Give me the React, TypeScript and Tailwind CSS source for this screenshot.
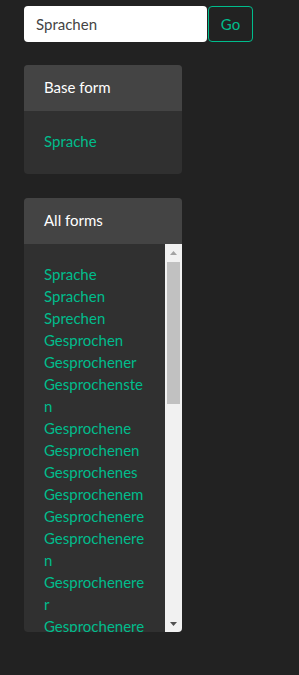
import React from 'react';

const forms = [
  'Sprache',
  'Sprachen',
  'Sprechen',
  'Gesprochen',
  'Gesprochener',
  'Gesprochensten',
  'Gesprochene',
  'Gesprochenen',
  'Gesprochenes',
  'Gesprochenem',
  'Gesprochenere',
  'Gesprocheneren',
  'Gesprochenerer',
  'Gesprocheneres',
  'Gesprochenerem',
];

const App = () => {
  return (
    <div className="min-h-[675px] bg-[#222222] font-['Lato',sans-serif] text-[15px] leading-[22px] text-white">
      <div className="px-6 pt-[6px]">
        {/* Search */}
        <form className="flex" onSubmit={(e) => e.preventDefault()}>
          <input
            type="text"
            defaultValue="Sprachen"
            className="h-[36px] w-[183px] rounded-[4px] bg-white px-3 pb-px text-[15px] text-[#444444] outline-none"
          />
          <button
            type="submit"
            className="ml-px h-[36px] w-[45px] rounded-[4px] border border-[#00bc8c] text-[15px] text-[#00bc8c]"
          >
            Go
          </button>
        </form>

        {/* Base form */}
        <div className="mt-[23px] w-[158px] overflow-hidden rounded-[4px] bg-[#303030]">
          <div className="bg-[#444444] px-5 pt-[11px] pb-[13px]">Base form</div>
          <div className="px-5 pt-[19px] pb-[22px] text-[#00bc8c]">Sprache</div>
        </div>

        {/* All forms */}
        <div className="mt-6 w-[158px] overflow-hidden rounded-[4px] bg-[#303030]">
          <div className="bg-[#444444] px-5 pt-[11px] pb-[13px]">All forms</div>
          <div className="flex h-[388px]">
            <div className="min-w-0 flex-1 overflow-hidden px-5 pt-[19px] text-[#00bc8c]">
              {forms.map((f, i) => (
                <div key={i} className="break-words">
                  {f}
                </div>
              ))}
            </div>
            {/* scrollbar */}
            <div className="flex w-[17px] shrink-0 flex-col bg-[#f1f1f1]">
              <div className="flex h-[17px] items-center justify-center">
                <svg width="7" height="4" viewBox="0 0 7 4">
                  <path d="M3.5 0L7 4H0z" fill="#a3a3a3" />
                </svg>
              </div>
              <div className="mx-[2px] mt-px h-[142px] bg-[#c1c1c1]" />
              <div className="flex-1" />
              <div className="flex h-[17px] items-center justify-center">
                <svg width="7" height="4" viewBox="0 0 7 4">
                  <path d="M0 0H7L3.5 4z" fill="#505050" />
                </svg>
              </div>
            </div>
          </div>
        </div>
      </div>
    </div>
  );
};

export default App;
